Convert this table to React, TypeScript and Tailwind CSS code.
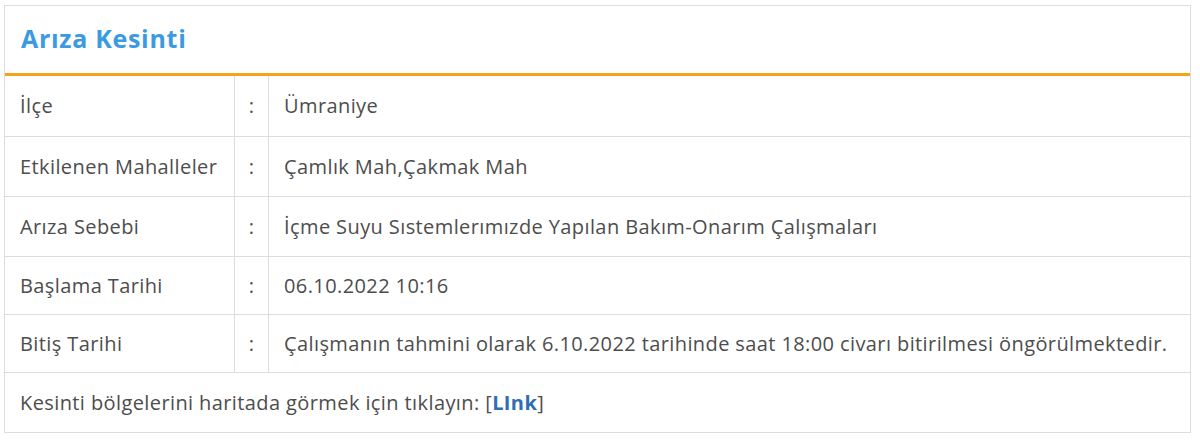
import React from "react";

const rows: [string, string, string][] = [
  ["İlçe", "Ümraniye", "h-[61px]"],
  ["Etkilenen Mahalleler", "Çamlık Mah,Çakmak Mah", "h-[60px]"],
  ["Arıza Sebebi", "İçme Suyu Sıstemlerımızde Yapılan Bakım-Onarım Çalışmaları", "h-[60px]"],
  ["Başlama Tarihi", "06.10.2022 10:16", "h-[58px]"],
  ["Bitiş Tarihi", "Çalışmanın tahmini olarak 6.10.2022 tarihinde saat 18:00 civarı bitirilmesi öngörülmektedir.", "h-[58px]"],
];

export default function App() {
  return (
    <div className="w-[1200px] h-[445px] bg-white pt-[5px] pl-[4px]" style={{ fontFamily: '"Open Sans", "Noto Sans", sans-serif' }}>
      <div className="w-[1187px] border border-[#dddddd] bg-white">
        <div className="h-[70px] flex items-center pl-[16px] pb-[2px] border-b-[3px] border-[#f5a31a]">
          <h1 className="text-[25px] font-bold text-[#3b9ae1] leading-none tracking-[0.7px]">Arıza Kesinti</h1>
        </div>
        <div className="text-[20px] text-[#4d4d4d] tracking-[0.4px]">
          {rows.map(([k, v, h], i) => (
            <div key={i} className={`flex ${h} border-b border-[#dddddd]`}>
              <div className="w-[230px] flex items-center pl-[15px] border-r border-[#dddddd]">{k}</div>
              <div className="w-[34px] flex items-center justify-center border-r border-[#dddddd]">:</div>
              <div className="flex-1 flex items-center pl-[15px]">{v}</div>
            </div>
          ))}
          <div className="h-[59px] flex items-center pl-[15px]">
            Kesinti bölgelerini haritada görmek için tıklayın: [<a className="font-bold text-[#2f6db5]">LInk</a>]
          </div>
        </div>
      </div>
    </div>
  );
}
